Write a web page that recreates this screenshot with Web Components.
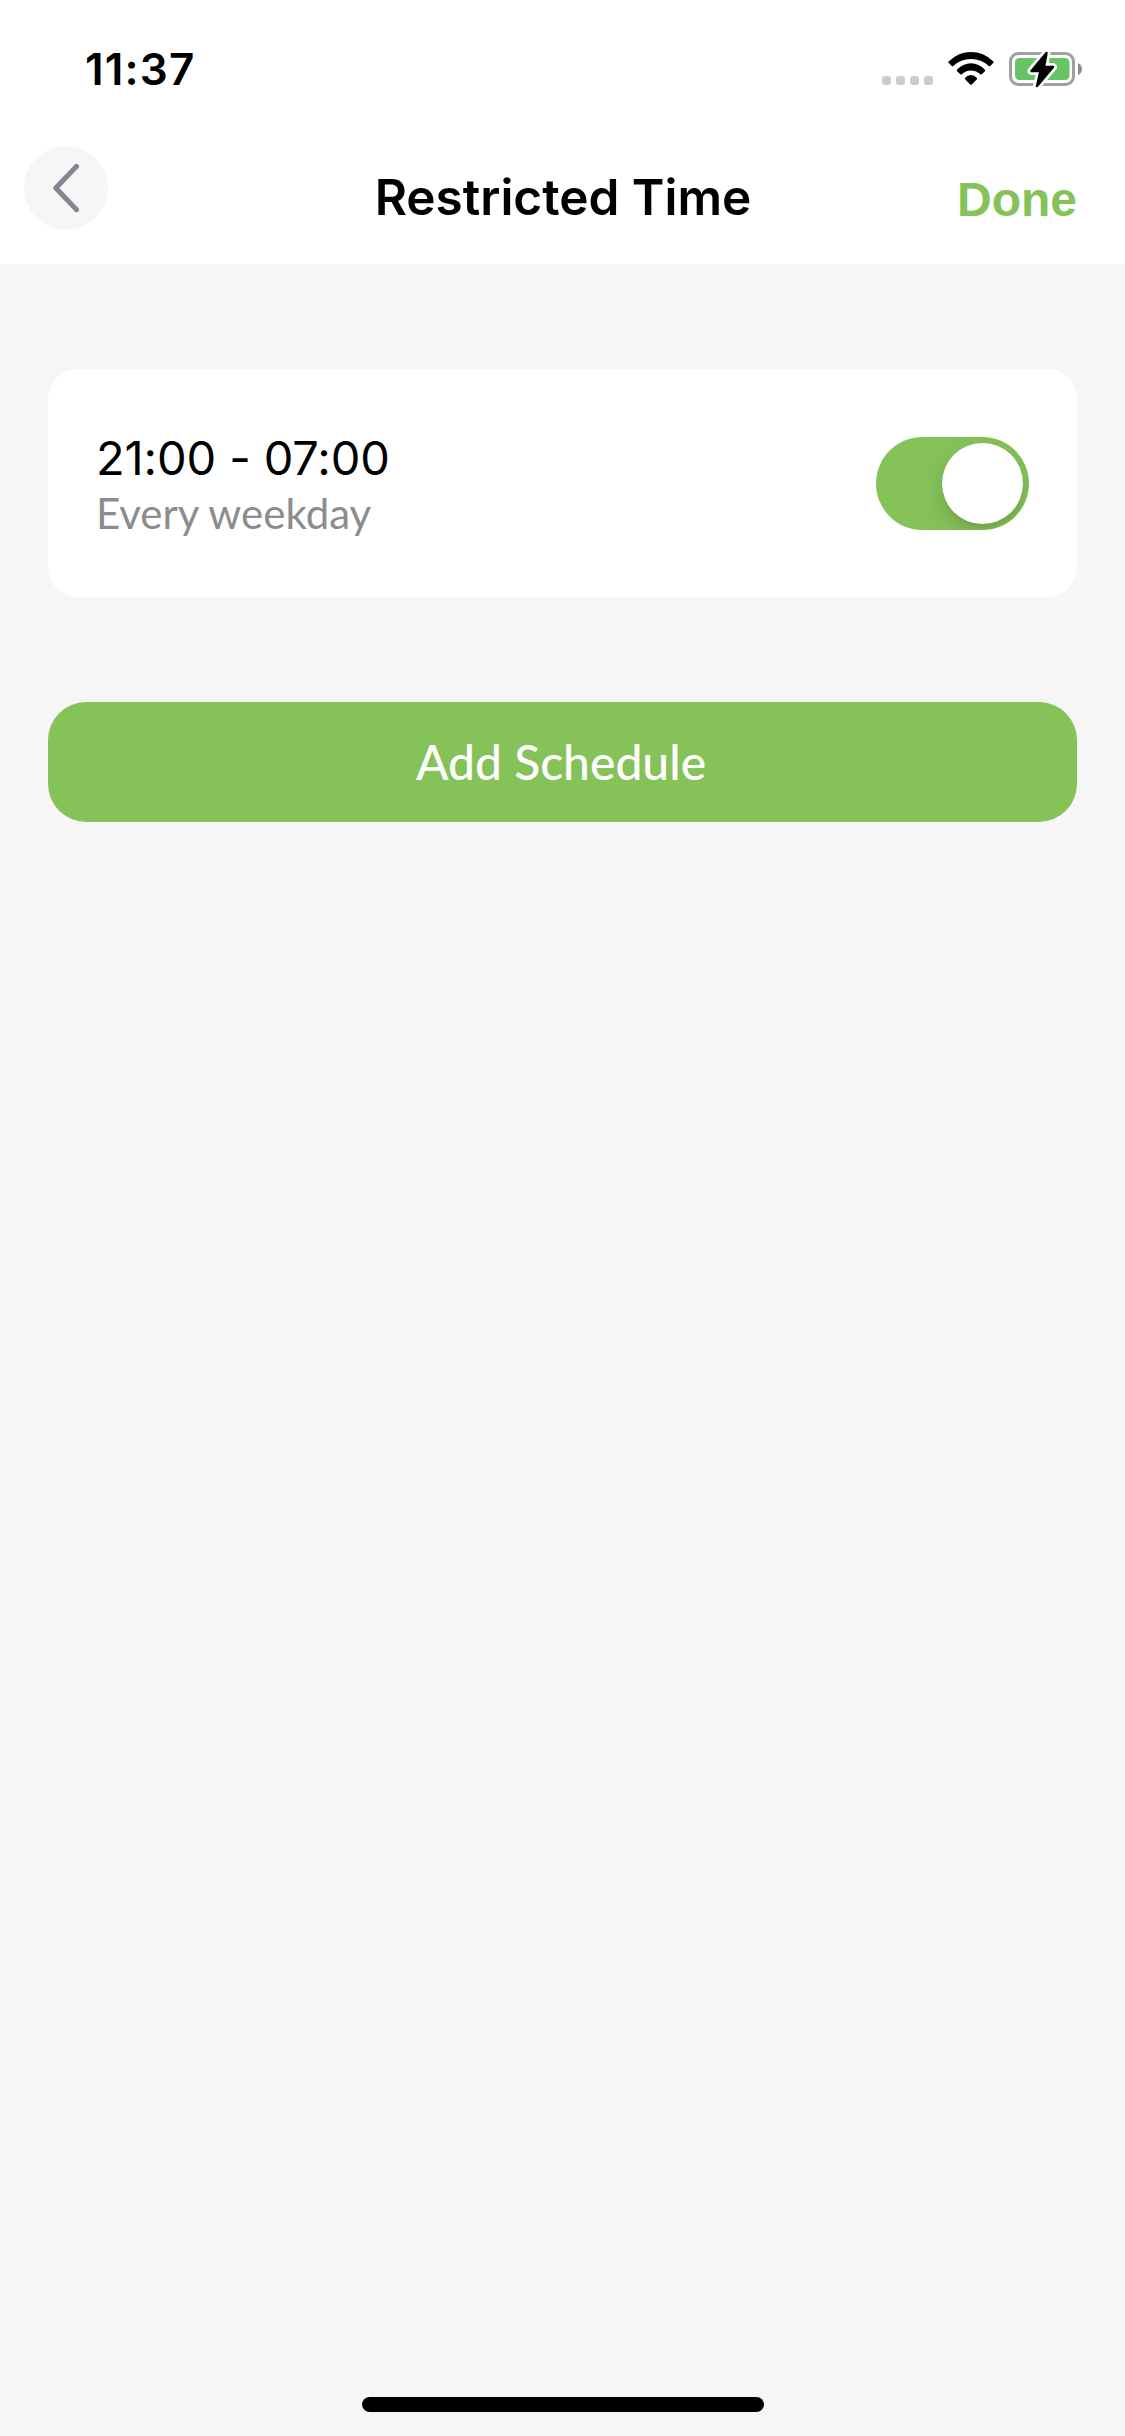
<!DOCTYPE html>
<html lang="en">
<head>
<meta charset="utf-8">
<title>Restricted Time</title>
<style>
html,body{margin:0;padding:0;background:#f6f6f6}
.dash{font-feature-settings:"calt" 0}
</style>
</head>
<body>
<app-screen>
  <status-bar slot="status">11:37</status-bar>
  <nav-bar slot="nav"><span>Restricted Time</span><span slot="action">Done</span></nav-bar>
  <schedule-card><span>21:00<span class="dash"> - </span>07:00</span><span slot="days">Every weekday</span><toggle-switch slot="control"></toggle-switch></schedule-card>
  <primary-button>Add Schedule</primary-button>
</app-screen>
<script>
const define = (name, html) => {
  const tpl = document.createElement('template');
  tpl.innerHTML = html;
  customElements.define(name, class extends HTMLElement {
    constructor() {
      super();
      this.attachShadow({ mode: 'open' }).append(tpl.content.cloneNode(true));
    }
  });
};

define('app-screen', `
<style>
:host{display:flex;flex-direction:column;width:1125px;height:2436px;background:#f6f6f6;overflow:hidden}
header{background:#fff;height:264px;flex:none;display:flex;flex-direction:column}
main{flex:1;display:flex;flex-direction:column;gap:105px;padding:105px 48px 0}
footer{display:flex;justify-content:center;padding:0 0 24px 1px}
.home{width:402px;height:15px;border-radius:7.5px;background:#000}
</style>
<header><slot name="status"></slot><slot name="nav"></slot></header>
<main><slot></slot></main>
<footer><div class="home"></div></footer>`);

define('status-bar', `
<style>
:host{display:flex;justify-content:space-between;height:132px;box-sizing:border-box;padding:44px 41px 0 85px;font:600 44px/50px Inter,sans-serif;color:#000}
span{letter-spacing:1.2px}
svg{display:block}
</style>
<span><slot></slot></span>
<svg width="204" height="48" viewBox="880 44 204 48">
  <g fill="#ccc"><rect x="882" y="76" width="9" height="9" rx="3"/><rect x="896" y="76" width="9" height="9" rx="3"/><rect x="910" y="76" width="9" height="9" rx="3"/><rect x="924" y="76" width="9" height="9" rx="3"/></g>
  <g fill="#000">
    <path d="M948.600 61.400Q958.500 52 971 52T993.400 61.400Q994 62.100 993.400 62.800L990.200 66Q989.500 66.600 988.800 66Q981.300 59 971 59T953.200 66Q952.500 66.600 951.800 66L948.600 62.800Q948 62.100 948.600 61.400Z"/>
    <path d="M957 69.800Q963 63.200 971 63.200T985 69.800Q985.600 70.500 985 71.200L981.700 74.300Q981 74.900 980.300 74.300Q976.500 70.400 971 70.400T961.700 74.300Q961 74.900 960.300 74.300L957 71.200Q956.400 70.500 957 69.800Z"/>
    <path d="M965 78Q967.600 75 971 75T977 78Q977.500 78.700 976.900 79.300L971.800 84.400Q971 85.200 970.200 84.400L965.100 79.300Q964.500 78.700 965 78Z"/>
  </g>
  <rect x="1010.500" y="53.500" width="63" height="31" rx="8" fill="none" stroke="#a0a0a0" stroke-width="3"/>
  <rect x="1015" y="58" width="54.500" height="22" rx="4.500" fill="#65c466"/>
  <path d="M1078 63Q1082 65 1082 69T1078 75Z" fill="#8c8c8c"/>
  <path d="M1046.500 53L1031.500 71H1040.500L1037 86L1053 67H1044Z" fill="#fff" stroke="#fff" stroke-width="8" stroke-linejoin="round"/>
  <path d="M1046.500 53L1031.500 71H1040.500L1037 86L1053 67H1044Z" fill="#000" stroke="#000" stroke-width="2.500" stroke-linejoin="round"/>
</svg>`);

define('nav-bar', `
<style>
:host{display:grid;grid-template-columns:1fr auto 1fr;height:132px;box-sizing:border-box;padding:14px 24px 0;color:#000}
.back{width:84px;height:84px;border-radius:50%;background:#f6f6f6;border:0;padding:0;display:block}
svg{display:block}
.title{font:600 49.500px/60px Inter,sans-serif;padding:21px 0 0 1px;white-space:nowrap}
.action{justify-self:end;font:700 48px/56px "Liberation Sans",sans-serif;color:#85c359;padding:26px 24px 0 0}
</style>
<button class="back" aria-label="Back"><svg width="84" height="84" viewBox="24 146 84 84"><path d="M76.600 166.300L55.800 188L76.600 209.700" fill="none" stroke="#858692" stroke-width="5" stroke-linecap="round" stroke-linejoin="round"/></svg></button>
<div class="title"><slot></slot></div>
<div class="action"><slot name="action"></slot></div>`);

define('schedule-card', `
<style>
:host{display:flex;justify-content:space-between;align-items:center;height:228px;box-sizing:border-box;padding:0 48px;border-radius:30px;background:#fff}
.text{display:flex;flex-direction:column}
.time{font:400 47px/58px Inter,sans-serif;letter-spacing:-.12px;color:#000}
.days{font:400 42px/50px Lato,sans-serif;color:#8c8c8c;padding-top:1px}
</style>
<div class="text"><div class="time"><slot></slot></div><div class="days"><slot name="days"></slot></div></div>
<slot name="control"></slot>`);

define('toggle-switch', `
<style>
:host{display:flex;justify-content:flex-end;width:153px;height:93px;box-sizing:border-box;padding:6px;border-radius:46.500px;background:#85c359;overflow:hidden}
i{width:81px;height:81px;border-radius:50%;background:#fff;box-shadow:0 9px 24px rgba(0,0,0,.15),0 3px 3px rgba(0,0,0,.05)}
</style><i></i>`);

define('primary-button', `
<style>
:host{display:flex;justify-content:center;align-items:center;height:120px;box-sizing:border-box;padding-right:3px;border-radius:38px;background:#85c359;color:#fff;font:500 48px/58px "Lato Medium",Lato,sans-serif}
</style><span><slot></slot></span>`);
</script>
</body>
</html>
